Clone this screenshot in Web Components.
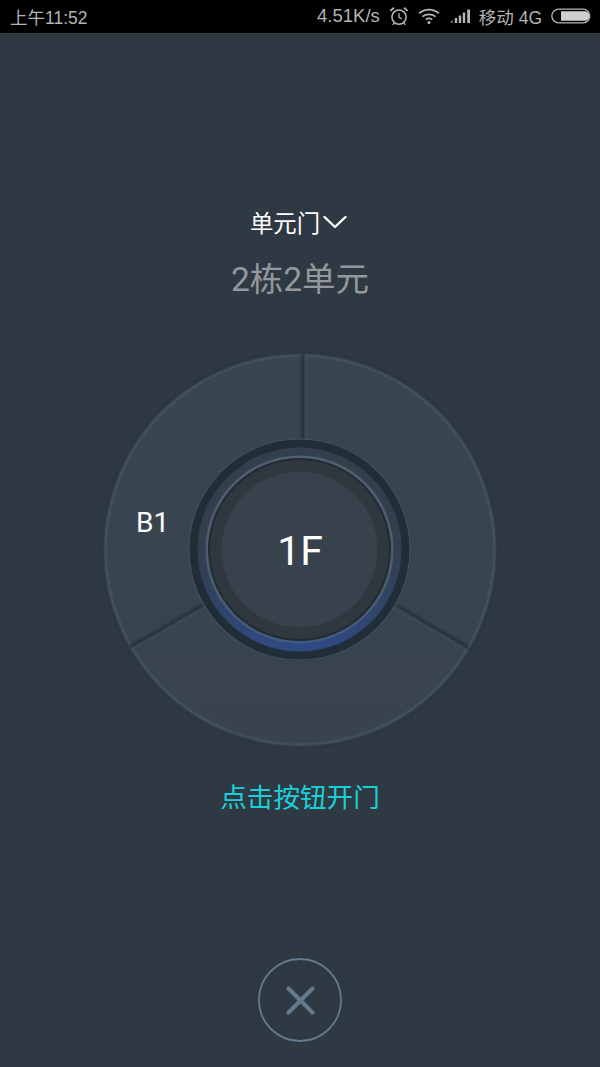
<!DOCTYPE html>
<html>
<head>
<meta charset="utf-8">
<style>
  html, body { margin: 0; padding: 0; }
  body {
    width: 600px;
    height: 1067px;
    overflow: hidden;
    background: #2f3943;
    font-family: Roboto, "Noto Sans CJK SC", sans-serif;
    display: flex;
    flex-direction: column;
    align-items: center;
  }
</style>
<script>
// small helper, every element below just sets its shadow html once
function makeElement(name, html) {
  customElements.define(name, class extends HTMLElement {
    constructor() {
      super();
      this.attachShadow({mode: 'open'}).innerHTML = html;
    }
  });
}

makeElement('status-bar', `
  <style>
    :host {
      display: flex;
      align-items: center;
      justify-content: space-between;
      box-sizing: border-box;
      width: 600px;
      height: 33px;
      padding: 0 8px 1px 10px;
      background: #000;
      color: #b4b4b4;
      font-family: "Liberation Sans", "Noto Sans CJK SC", sans-serif;
      font-size: 17.5px;
    }
    .right { display: flex; align-items: center; }
    .speed { font-size: 18.5px; margin-right: 9px; }
    .net { margin: 0 9px 0 8px; font-size: 17.5px; }
    svg { display: block; }
  </style>
  <span>上午11:52</span>
  <div class="right">
    <span class="speed">4.51K/s</span>
    <svg width="20" height="20" viewBox="1 1 18 18" fill="none" stroke="#b4b4b4">
      <circle cx="10" cy="11" r="6.4" stroke-width="1.4"/>
      <path d="M10 7.5V11.3L12.6 12.6" stroke-width="1.2"/>
      <path d="M2.2 5.4 5.4 2.6M17.8 5.4 14.6 2.6" stroke-width="1.6"/>
      <path d="M5.6 16.2 4.4 18M14.4 16.2 15.6 18" stroke-width="1.2"/>
    </svg>
    <svg width="22" height="18" viewBox="0 0 22 18" fill="none" stroke="#b4b4b4" stroke-width="1.8" style="margin-left:9px">
      <path d="M1 6.4C7 1.4 15 1.4 21 6.4"/>
      <path d="M4.4 9.6C8.2 6.6 13.8 6.6 17.6 9.6"/>
      <path d="M7.8 12.6C9.7 11.2 12.3 11.2 14.2 12.6"/>
      <circle cx="11" cy="15.6" r="1.5" fill="#b4b4b4" stroke="none"/>
    </svg>
    <svg width="21" height="14" viewBox="0 0 19.4 14" fill="#b4b4b4" style="margin-left:10px">
      <rect x="0" y="11.5" width="2" height="2.5" opacity=".6"/>
      <rect x="4" y="9" width="2.4" height="5"/>
      <rect x="8" y="6.5" width="2.4" height="7.5"/>
      <rect x="12" y="3.5" width="2.4" height="10.5"/>
      <rect x="16.4" y="0.5" width="2.8" height="13.5"/>
    </svg>
    <span class="net">移动 4G</span>
    <svg width="41" height="16" viewBox="0 0 41 16" fill="none">
      <rect x="0.8" y="1.2" width="38" height="13.6" rx="6.8" stroke="#b4b4b4" stroke-width="1.3"/>
      <path d="M10 3.2H33.5A4.8 4.8 0 0 1 33.5 12.8H10Z" fill="#cfcfcf"/>
    </svg>
  </div>
`);

makeElement('door-picker', `
  <style>
    :host {
      display: flex;
      flex-direction: column;
      align-items: center;
      margin-top: 171px;
      font-family: Roboto, "Noto Sans CJK SC", sans-serif;
    }
    .pick {
      display: flex;
      align-items: center;
      gap: 3px;
      padding-right: 3px;
      height: 36px;
      color: #fff;
      font-size: 23.4px;
    }
    .name {
      margin-top: 18px;
      height: 44px;
      line-height: 44px;
      color: #94989c;
      font-size: 33.5px;
    }
    svg { display: block; margin-top: -1px; }
  </style>
  <div class="pick"><slot name="door"></slot>
    <svg width="24" height="14" viewBox="0 0 24 14" fill="none" stroke="#fff" stroke-width="2.4" stroke-linecap="round" stroke-linejoin="round">
      <path d="M1.5 2 12 12 22.5 2"/>
    </svg>
  </div>
  <div class="name"><slot name="building"></slot></div>
`);

makeElement('floor-dial', `
  <style>
    :host {
      display: block;
      position: relative;
      width: 400px;
      height: 400px;
      margin-top: 48px;
      font-family: Roboto, sans-serif;
      color: #fff;
    }
    svg { display: block; }
    .floor {
      position: absolute;
      left: 36px;
      top: 151px;
      font-size: 28px;
      line-height: 44px;
    }
    .current {
      position: absolute;
      left: 0;
      right: 0;
      top: 173px;
      text-align: center;
      font-size: 41px;
      line-height: 56px;
    }
  </style>
  <svg width="400" height="400" viewBox="0 0 400 400">
    <defs>
      <linearGradient id="seg" x1="0" y1="0" x2="0" y2="1">
        <stop offset="0" stop-color="#394551"/>
        <stop offset="1" stop-color="#38434e"/>
      </linearGradient>
      <linearGradient id="ring" x1="0" y1="0" x2="0" y2="1">
        <stop offset="0" stop-color="#333f4c"/>
        <stop offset="0.5" stop-color="#333f4c"/>
        <stop offset="0.78" stop-color="#2f4468"/>
        <stop offset="1" stop-color="#2f4a86"/>
      </linearGradient>
      <linearGradient id="edge" x1="0" y1="0" x2="0" y2="1">
        <stop offset="0" stop-color="#4f6072"/>
        <stop offset="0.7" stop-color="#4a5c70"/>
        <stop offset="1" stop-color="#3f5a80"/>
      </linearGradient>
      <filter id="soft" x="-5%" y="-5%" width="110%" height="110%">
        <feGaussianBlur stdDeviation="0.9"/>
      </filter>
      <filter id="softer" x="-5%" y="-5%" width="110%" height="110%">
        <feGaussianBlur stdDeviation="1.6"/>
      </filter>
    </defs>

    <circle cx="200" cy="200" r="197" fill="#232c35" opacity=".7" filter="url(#softer)"/>
    <circle cx="200" cy="200" r="195.5" fill="url(#seg)"/>
    <circle cx="200" cy="200" r="194.8" fill="none" stroke="#4a5968" stroke-width="2" filter="url(#soft)"/>

    <!-- dividers between the three segments -->
    <g filter="url(#soft)">
      <path d="M203 4V90" stroke="#252f38" stroke-width="3"/>
      <path d="M205.6 4V90" stroke="#4a5969" stroke-width="1"/>
      <path d="M30 297 105 254" stroke="#252f38" stroke-width="2.8"/>
      <path d="M31 299.6 106 256.6" stroke="#4a5969" stroke-width="1"/>
      <path d="M294 254 369 298" stroke="#252f38" stroke-width="2.8"/>
      <path d="M293 256.6 368 300.6" stroke="#4a5969" stroke-width="1"/>
    </g>

    <circle cx="199.5" cy="199.5" r="111" fill="#45535f"/>
    <circle cx="199.5" cy="199.5" r="110" fill="#212d37"/>
    <circle cx="199.5" cy="199.5" r="102" fill="url(#ring)"/>
    <circle cx="199.5" cy="199.5" r="94" fill="url(#edge)"/>
    <circle cx="199.5" cy="199.5" r="91.5" fill="#232a31"/>
    <circle cx="199.5" cy="199.5" r="89.5" fill="#2f373f"/>
    <circle cx="199.5" cy="199.5" r="78" fill="#38424c"/>
  </svg>
  <span class="floor"><slot name="other"></slot></span>
  <span class="current"><slot name="current"></slot></span>
`);

makeElement('open-hint', `
  <style>
    :host {
      display: block;
      margin-top: 28px;
      height: 36px;
      line-height: 36px;
      color: #1bcfd8;
      font-family: "Noto Sans CJK SC", sans-serif;
      font-size: 26.6px;
    }
  </style>
  <slot></slot>
`);

makeElement('close-button', `
  <style>
    :host {
      display: block;
      margin-top: 144px;
      width: 84px;
      height: 84px;
    }
    svg { display: block; }
  </style>
  <svg width="84" height="84" viewBox="0 0 84 84" fill="none" stroke="#65798d">
    <circle cx="42" cy="42" r="41" stroke-width="1.8"/>
    <path d="M30.5 30.5 54.5 54.5M54.5 30.5 30.5 54.5" stroke-width="4.2" stroke-linecap="round"/>
  </svg>
`);
</script>
</head>
<body>
  <status-bar></status-bar>
  <door-picker>
    <span slot="door">单元门</span>
    <span slot="building">2栋2单元</span>
  </door-picker>
  <floor-dial>
    <span slot="other">B1</span>
    <span slot="current">1F</span>
  </floor-dial>
  <open-hint>点击按钮开门</open-hint>
  <close-button></close-button>
</body>
</html>
